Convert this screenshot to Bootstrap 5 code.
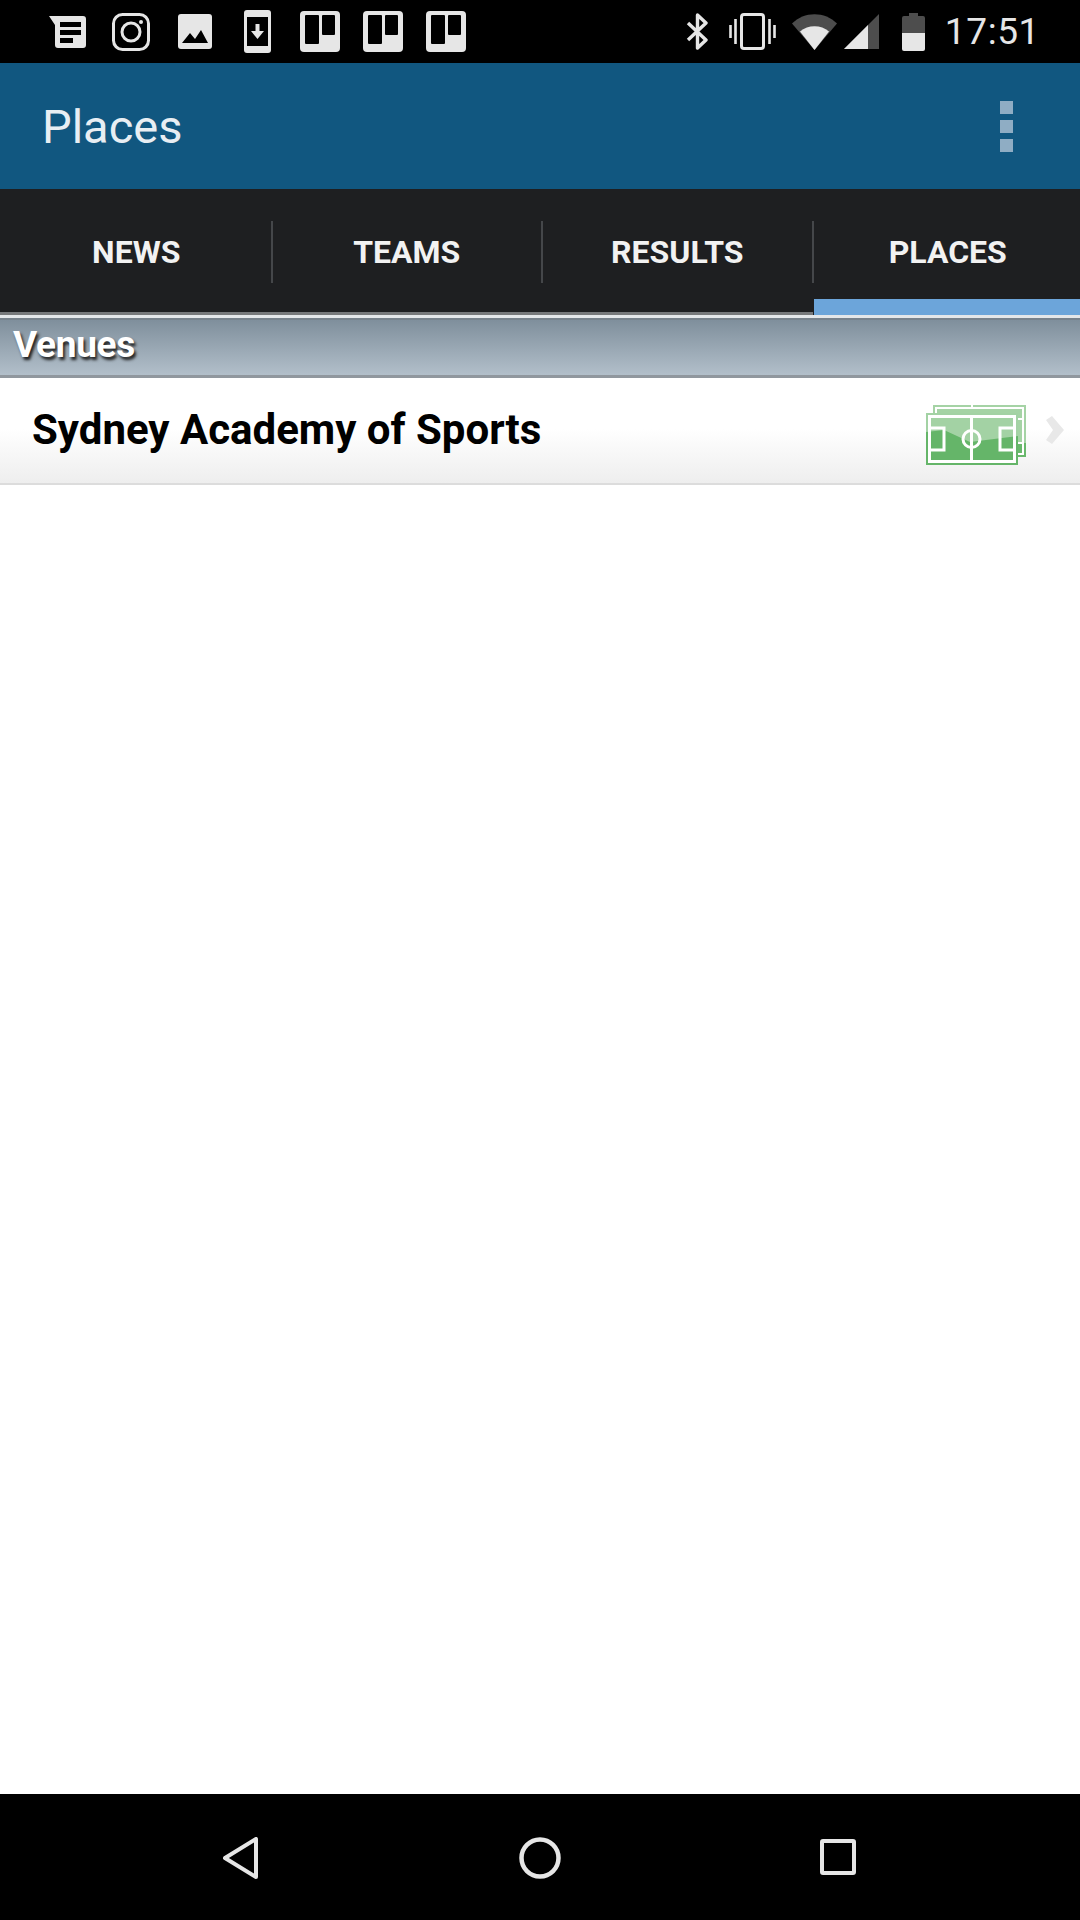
<!DOCTYPE html>
<html lang="en">
<head>
    <meta charset="UTF-8">
    <meta name="viewport" content="width=device-width, initial-scale=1.0">
    <title>Places</title>
    <link href="https://cdn.jsdelivr.net/npm/bootstrap@5.3.0/dist/css/bootstrap.min.css" rel="stylesheet">
    <style>
        body {
            width: 1080px;
            height: 1920px;
            overflow: hidden;
            background: #fff;
            font-family: Roboto, "Liberation Sans", sans-serif;
        }
        .status-strip { height: 63px; background: #000; padding: 0 40px 0 49px; color: #e6e6e6; }
        .status-strip svg { display: block; }
        .left-icons { gap: 25px; }
        .right-icons { gap: 16px; }
        .clock { font-size: 37px; line-height: 63px; margin-left: 4px; letter-spacing: .6px; }
        .battery-icon { margin-left: 7px; }
        .signal-icon { margin-left: -9px; }
        .image-icon { margin-left: 3px; }
        .phone-icon { margin-left: 7px; }
        .trello-first { margin-left: 4px; }
        .trello-next { margin-left: -2px; }
        .app-head { height: 126px; background: #115780; padding: 0 67px 0 42px; }
        .app-title { font-size: 47px; color: #e8eef3; font-weight: 400; margin: 3px 0 0; }
        .dots-menu { width: 13px; }
        .dots-menu i { display: block; height: 13px; margin-bottom: 6px; background: #8fadc4; }
        .dots-menu i:last-child { margin-bottom: 0; }
        .tab-strip { height: 126px; background: #1e1f21; padding-left: 1px; overflow: hidden; }
        .tab-cell { flex: 0 0 270.5px; height: 100%; position: relative; color: #f2f2f2; font-size: 32px; font-weight: 700; padding-bottom: 1px; }
        .tab-cell + .tab-cell::before {
            content: "";
            position: absolute;
            left: -1px;
            top: 32px;
            height: 62px;
            width: 2px;
            background: #45474a;
        }
        .tab-cell::after {
            content: "";
            position: absolute;
            left: -1px;
            right: 0;
            bottom: 0;
            height: 3px;
            background: #77797b;
        }
        .tab-cell.tab-on::after { height: 16px; left: 1px; background: #6ca5da; }
        .rule-white { height: 3px; background: #e4e7ea; }
        .venues-head {
            height: 60px;
            background: linear-gradient(#7f8f9c, #b2bfca);
            border-top: 2px solid #77828c;
            border-bottom: 3px solid #90979e;
            padding: 0 0 5px 13px;
            color: #fff;
            font-size: 37px;
            font-weight: 700;
            letter-spacing: -.3px;
            text-shadow: 2px 3px 3px #222;
        }
        .venue-row {
            height: 107px;
            background: linear-gradient(#fff 48%, #eeeeee);
            border-bottom: 2px solid #dcdcdc;
            padding: 0 16px 1px 32px;
            color: #000;
        }
        .venue-name { font-size: 42px; font-weight: 700; margin: 0; line-height: 1; }
        .pitch-icon { margin-top: 9px; margin-right: 20px; display: block; }
        .row-chevron { display: block; }
        .page-blank { height: 1309px; background: #fff; }
        .soft-keys { height: 126px; background: #000; }
        .soft-keys svg { position: absolute; top: 43px; }
        .key-back { left: 223px; }
        .key-home { left: 519px; }
        .soft-keys .key-recent { left: 820px; top: 45px; }
    </style>
</head>
<body>
    <div class="status-strip d-flex justify-content-between align-items-center">
        <div class="left-icons d-flex align-items-center">
            <!-- messages -->
            <svg width="38" height="32" viewBox="0 0 38 32"><path d="M0 0H34a3 3 0 0 1 3 3V29a3 3 0 0 1-3 3H9a3 3 0 0 1-3-3V9Z" fill="#e6e6e6"/><path d="M11 6H32V11H11ZM11 14H32V19H11ZM11 22H24V27H11Z" fill="#000"/></svg>
            <!-- instagram -->
            <svg width="38" height="38" viewBox="0 0 38 38" fill="none" stroke="#e6e6e6" stroke-width="3"><rect x="1.5" y="1.5" width="35" height="35" rx="9"/><circle cx="19" cy="19" r="9"/><circle cx="29" cy="9" r="2" fill="#e6e6e6" stroke="none"/></svg>
            <!-- image -->
            <svg class="image-icon" width="34" height="35" viewBox="0 0 34 35"><rect width="34" height="35" rx="3" fill="#e6e6e6"/><path d="M4 29 12 19 17 25 23 16 30 29Z" fill="#000"/></svg>
            <!-- download -->
            <svg class="phone-icon" width="27" height="43" viewBox="0 0 27 43"><rect width="27" height="43" rx="3" fill="#e6e6e6"/><rect x="3" y="7" width="21" height="29" fill="#000"/><path d="M11.5 14H15.5V21H20L13.5 29 7 21H11.5Z" fill="#e6e6e6"/></svg>
            <!-- trello x3 -->
            <svg class="trello-first" width="40" height="41" viewBox="0 0 40 41"><rect width="40" height="41" rx="4" fill="#e6e6e6"/><rect x="5" y="4" width="14" height="29" rx="1" fill="#000"/><rect x="22" y="4" width="13" height="20" rx="1" fill="#000"/></svg>
            <svg class="trello-next" width="40" height="41" viewBox="0 0 40 41"><rect width="40" height="41" rx="4" fill="#e6e6e6"/><rect x="5" y="4" width="14" height="29" rx="1" fill="#000"/><rect x="22" y="4" width="13" height="20" rx="1" fill="#000"/></svg>
            <svg class="trello-next" width="40" height="41" viewBox="0 0 40 41"><rect width="40" height="41" rx="4" fill="#e6e6e6"/><rect x="5" y="4" width="14" height="29" rx="1" fill="#000"/><rect x="22" y="4" width="13" height="20" rx="1" fill="#000"/></svg>
        </div>
        <div class="right-icons d-flex align-items-center">
            <!-- bluetooth -->
            <svg width="23" height="37" viewBox="0 0 23 37" fill="none" stroke="#e6e6e6" stroke-width="3.4" stroke-linejoin="round"><path d="M2 10 20 27 11.5 35V2L20 10 2 27"/></svg>
            <!-- vibrate -->
            <svg class="ms-1" width="47" height="37" viewBox="0 0 47 37" fill="none" stroke="#e6e6e6" stroke-width="2.6"><rect x="12.5" y="1.5" width="22" height="34" rx="2.5" stroke-width="3"/><path d="M1.5 12V25M6.5 6V31M40.5 6V31M45.5 12V25"/></svg>
            <!-- wifi -->
            <svg width="45" height="36" viewBox="0 0 45 36"><path d="M0 9.5C12-3 33-3 45 9.5L22.5 36Z" fill="#4d4d4d"/><path d="M8 17.5C16 10.5 29 10.5 37 17.5L22.500 36Z" fill="#e6e6e6"/></svg>
            <!-- signal -->
            <svg class="signal-icon" width="35" height="35" viewBox="0 0 35 35"><path d="M35 0V35H0Z" fill="#4d4d4d"/><path d="M24 11V35H0Z" fill="#e6e6e6"/></svg>
            <!-- battery -->
            <svg class="battery-icon" width="23" height="38" viewBox="0 0 23 38"><path d="M7 0H16V3H21a2 2 0 0 1 2 2V20H0V5a2 2 0 0 1 2-2H7Z" fill="#4d4d4d"/><path d="M0 20H23V36a2 2 0 0 1-2 2H2a2 2 0 0 1-2-2Z" fill="#e6e6e6"/></svg>
            <span class="clock">17:51</span>
        </div>
    </div>

    <div class="app-head d-flex justify-content-between align-items-center">
        <h1 class="app-title">Places</h1>
        <div class="dots-menu"><i></i><i></i><i></i></div>
    </div>

    <div class="tab-strip d-flex">
        <div class="tab-cell d-flex align-items-center justify-content-center">NEWS</div>
        <div class="tab-cell d-flex align-items-center justify-content-center">TEAMS</div>
        <div class="tab-cell d-flex align-items-center justify-content-center">RESULTS</div>
        <div class="tab-cell tab-on d-flex align-items-center justify-content-center">PLACES</div>
    </div>
    <div class="rule-white"></div>

    <div class="venues-head d-flex align-items-center">Venues</div>

    <div class="venue-row d-flex align-items-center justify-content-between">
        <p class="venue-name">Sydney Academy of Sports</p>
        <div class="d-flex align-items-center">
            <svg class="pitch-icon" width="100" height="60" viewBox="0 0 100 60">
                <rect x="7" y="0" width="93" height="52" fill="#a5d3a5"/>
                <path d="M70 38H100V52H7V45Z" fill="#69b86c"/>
                <rect x="10" y="3" width="87" height="46" fill="none" stroke="#fff" stroke-width="2"/>
                <path d="M46 0V4M86 14H97M86 38H97M86 14V38" fill="none" stroke="#fff" stroke-width="2"/>
                <rect x="0" y="8" width="92" height="52" fill="#a3d2a4"/>
                <path d="M0 27 18 25 44 37 92 31V60H0Z" fill="#65b569"/>
                <rect x="3.500" y="11.500" width="85" height="45" fill="none" stroke="#fff" stroke-width="3"/>
                <path d="M45.500 11V57M4 23H18V45H4M88 23H74V45H88" fill="none" stroke="#fff" stroke-width="3"/>
                <circle cx="45.500" cy="34" r="8.500" fill="none" stroke="#fff" stroke-width="3"/>
            </svg>
            <svg class="row-chevron" width="18" height="28" viewBox="0 0 18 28"><path d="M0 4 6 0 18 14 6 28 0 24 7 14Z" fill="#e8e8e8"/></svg>
        </div>
    </div>

    <div class="page-blank"></div>

    <div class="soft-keys position-relative">
        <svg class="key-back" width="36" height="42" viewBox="0 0 36 42" fill="none" stroke="#e6e6e6" stroke-width="4" stroke-linejoin="round"><path d="M33 2V40L2 21Z"/></svg>
        <svg class="key-home" width="42" height="42" viewBox="0 0 42 42" fill="none" stroke="#e6e6e6" stroke-width="4.500"><circle cx="21" cy="21" r="18.500"/></svg>
        <svg class="key-recent" width="36" height="36" viewBox="0 0 36 36" fill="none" stroke="#e6e6e6" stroke-width="4" stroke-linejoin="round"><rect x="2" y="2" width="32" height="32" rx="1"/></svg>
    </div>
</body>
</html>
